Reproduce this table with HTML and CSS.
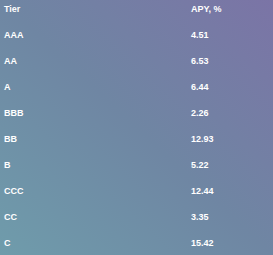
FILE: index.html
```html
<!DOCTYPE html>
<html lang="en">
<head>
    <meta charset="UTF-8">
    <title>Tier APY</title>
    <link rel="stylesheet" href="styles.css">
</head>
<body>
    <table class="apy-table">
        <thead>
            <tr><th>Tier</th><th>APY, %</th></tr>
        </thead>
        <tbody>
            <tr><td>AAA</td><td>4.51</td></tr>
            <tr><td>AA</td><td>6.53</td></tr>
            <tr><td>A</td><td>6.44</td></tr>
            <tr><td>BBB</td><td>2.26</td></tr>
            <tr><td>BB</td><td>12.93</td></tr>
            <tr><td>B</td><td>5.22</td></tr>
            <tr><td>CCC</td><td>12.44</td></tr>
            <tr><td>CC</td><td>3.35</td></tr>
            <tr><td>C</td><td>15.42</td></tr>
        </tbody>
    </table>
</body>
</html>
```

FILE: styles.css
```css
html, body {
    margin: 0;
    height: 100%;
}

body {
    background: linear-gradient(to top right, #6f9cab 0%, #6f86a3 50%, #7b74a6 100%);
    font-family: "Liberation Sans", Arial, sans-serif;
    color: #fff;
    overflow: hidden;
}

.apy-table {
    width: 100%;
    border-collapse: collapse;
    font-size: 9px;
    font-weight: bold;
}

.apy-table th,
.apy-table td {
    height: 26px;
    box-sizing: border-box;
    padding: 4px 0 0 4px;
    text-align: left;
    vertical-align: top;
}

.apy-table th:first-child,
.apy-table td:first-child {
    width: 187px;
}
```
